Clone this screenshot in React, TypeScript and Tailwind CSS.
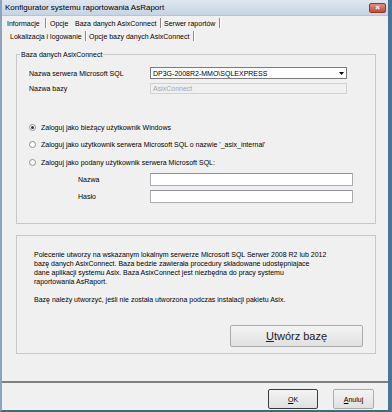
import React from "react";

function Sep() {
  return <span className="block w-px h-[10px] bg-[#8c8c8c] border-r border-r-white box-content shrink-0" />;
}

function Radio({ checked }: { checked?: boolean }) {
  return (
    <span className="w-[7px] h-[7px] rounded-full border border-[#8e8f8f] bg-white flex items-center justify-center shrink-0">
      {checked && <span className="w-[3px] h-[3px] rounded-full bg-[#333]" />}
    </span>
  );
}

export default function App() {
  return (
    <div className="w-[392px] h-[412px] flex flex-col bg-[#f0f0f0] text-[7px] leading-[9px] text-black font-['Liberation_Sans',Arial,sans-serif] border-l-2 border-l-[#8ea4bb] border-r-4 border-r-[#4a7396] border-b-2 border-b-[#3d6b7d] overflow-hidden">
      {/* title bar */}
      <div className="h-[16px] shrink-0 flex items-center pl-[3px] text-[8px] bg-gradient-to-b from-[#dde6f0] to-[#c6d4e3] border-b border-b-[#b5c3d2]">
        <span>Konfigurator systemu raportowania AsRaport</span>
        <span className="ml-auto mr-[2px] w-[17px] h-[10px] rounded-[2px] bg-gradient-to-b from-[#e08f80] to-[#c4483a] border border-[#8c3a30] flex items-center justify-center text-white text-[8px] leading-none font-bold">
          ×
        </span>
      </div>

      {/* tabs */}
      <div className="h-[12px] mt-[1px] flex items-center whitespace-nowrap">
        <span className="ml-[5px] w-[38px]">Informacje</span>
        <Sep />
        <span className="ml-[3px] w-[25px]">Opcje</span>
        <span className="w-[85px]">Baza danych AsixConnect</span>
        <Sep />
        <span className="ml-[2px] w-[55px]">Serwer raportów</span>
        <Sep />
      </div>
      <div className="h-[14px] flex items-center whitespace-nowrap">
        <span className="ml-[8px] w-[75px]">Lokalizacja i logowanie</span>
        <Sep />
        <span className="ml-[2px] w-[104px]">Opcje bazy danych AsixConnect</span>
        <Sep />
      </div>

      {/* group box: database */}
      <fieldset className="mt-[7px] ml-[14px] w-[360px] border border-[#c8c8c8] pb-[20px]">
        <legend className="ml-[3px] px-[1px] leading-[9px]">Baza danych AsixConnect</legend>

        <div className="mt-[8px] flex items-center pl-[12px] h-[12px]">
          <span className="w-[121px]">Nazwa serwera Microsoft SQL</span>
          <div className="w-[197px] h-[12px] bg-white border border-[#7a7a7a] flex items-center pl-[2px]">
            <span>DP3G-2008R2-MMO\SQLEXPRESS</span>
            <span className="ml-auto w-[9px] h-[10px] flex items-center justify-center">
              <svg width="5" height="3" viewBox="0 0 5 3"><path d="M0 0h5L2.5 3z" fill="#000" /></svg>
            </span>
          </div>
        </div>
        <div className="mt-[4px] flex items-center pl-[12px] h-[11px]">
          <span className="w-[121px]">Nazwa bazy</span>
          <div className="w-[197px] h-[11px] border border-[#d2d2d2] flex items-center pl-[2px] text-[#a6a6a6]">
            AsixConnect
          </div>
        </div>

        <div className="mt-[28px] h-[10px] flex items-center pl-[12px] gap-[5px]">
          <Radio checked />
          <span>Zaloguj jako bieżący użytkownik Windows</span>
        </div>
        <div className="mt-[7px] h-[10px] flex items-center pl-[12px] gap-[5px]">
          <Radio />
          <span>Zaloguj jako użytkownik serwera Microsoft SQL o nazwie '_asix_internal'</span>
        </div>
        <div className="mt-[8px] h-[10px] flex items-center pl-[12px] gap-[5px]">
          <Radio />
          <span>Zaloguj jako podany użytkownik serwera Microsoft SQL:</span>
        </div>

        <div className="mt-[6px] flex items-center pl-[61px] h-[13px]">
          <span className="w-[72px]">Nazwa</span>
          <div className="w-[203px] h-[13px] bg-white border border-[#abadb3] border-t-[#8f929a]" />
        </div>
        <div className="mt-[4px] flex items-center pl-[61px] h-[13px]">
          <span className="w-[72px]">Hasło</span>
          <div className="w-[203px] h-[13px] bg-white border border-[#abadb3] border-t-[#8f929a]" />
        </div>
      </fieldset>

      {/* group box: description */}
      <div className="mt-[11px] ml-[14px] w-[360px] h-[119px] border border-[#c8c8c8] flex flex-col pt-[14px] pl-[17px]">
        <p>
          Polecenie utworzy na wskazanym lokalnym serwerze Microsoft SQL Serwer 2008 R2 lub 2012<br />
          bazę danych AsixConnect. Baza bedzie zawierała procedury składowane udostępniajace<br />
          dane aplikacji systemu Asix. Baza AsixConnect jest niezbędna do pracy systemu<br />
          raportowania AsRaport.
        </p>
        <p className="mt-[9px]">Bazę należy utworzyć, jeśli nie została utworzona podczas instalacji pakietu Asix.</p>
        <div className="mt-auto mb-[6px] mr-[12px] flex justify-end">
          <button className="w-[133px] h-[22px] border border-[#acacac] rounded-[2px] bg-gradient-to-b from-[#f4f4f4] to-[#e0e0e0] text-[11px] leading-none text-[#222]">
            <span className="underline">U</span>twórz bazę
          </button>
        </div>
      </div>

      {/* separator */}
      <div className="mt-[27px] h-[2px] shrink-0 bg-[#7f7f7f]" />

      {/* footer */}
      <div className="mt-[6px] flex justify-end pr-[14px] gap-[15px]">
        <button className="w-[50px] h-[20px] border border-[#3c3c3c] rounded-[2px] bg-gradient-to-b from-[#f4f4f4] to-[#e0e0e0] text-[7px] leading-none">
          <span className="underline">O</span>K
        </button>
        <button className="w-[41px] h-[20px] border border-[#acacac] rounded-[2px] bg-gradient-to-b from-[#f4f4f4] to-[#e0e0e0] text-[7px] leading-none">
          <span className="underline">A</span>nuluj
        </button>
      </div>
    </div>
  );
}
